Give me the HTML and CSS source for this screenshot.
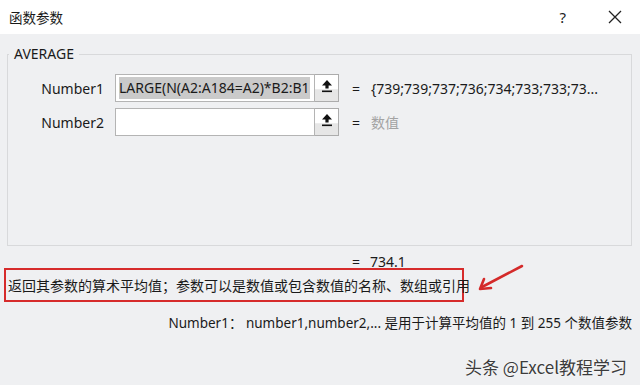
FILE: index.html
```html
<!DOCTYPE html>
<html lang="zh-CN">
<head>
    <meta charset="UTF-8">
    <meta name="viewport" content="width=device-width, initial-scale=1.0">
    <title>函数参数</title>
    <link rel="stylesheet" href="styles.css">
</head>
<body>
<div class="dialog">
    <!-- Title bar -->
    <div class="titlebar">
        <div class="title">函数参数</div>
        <div class="title-actions">
            <span class="help">?</span>
            <svg class="close" width="14" height="14" viewBox="0 0 14 14">
                <path d="M1 1 L13 13 M13 1 L1 13" stroke="#222" stroke-width="1.3" fill="none"/>
            </svg>
        </div>
    </div>

    <!-- Main content -->
    <div class="content">
        <fieldset class="group">
            <legend>AVERAGE</legend>
            <div class="arg-row">
                <label class="arg-label">Number1</label>
                <div class="arg-input"><span class="selected">LARGE(N(A2:A184=A2)*B2:B1</span></div>
                <button class="ref-btn">
                    <svg width="12" height="14" viewBox="0 0 12 14">
                        <path d="M6 1 L11 6.5 L7.6 6.5 L7.6 9.5 L4.4 9.5 L4.4 6.5 L1 6.5 Z" fill="#111"/>
                        <rect x="1" y="11.5" width="10" height="1.6" fill="#111"/>
                    </svg>
                </button>
                <span class="eq">=</span>
                <span class="arg-value">{739;739;737;736;734;733;733;73...</span>
            </div>
            <div class="arg-row">
                <label class="arg-label">Number2</label>
                <div class="arg-input"></div>
                <button class="ref-btn">
                    <svg width="12" height="14" viewBox="0 0 12 14">
                        <path d="M6 1 L11 6.5 L7.6 6.5 L7.6 9.5 L4.4 9.5 L4.4 6.5 L1 6.5 Z" fill="#111"/>
                        <rect x="1" y="11.5" width="10" height="1.6" fill="#111"/>
                    </svg>
                </button>
                <span class="eq">=</span>
                <span class="arg-value placeholder">数值</span>
            </div>
        </fieldset>

        <div class="result"><span class="eq">=</span>734.1</div>

        <div class="desc-line">
            <div class="desc-box">返回其参数的算术平均值；参数可以是数值或包含数值的名称、数组或引用</div>
            <svg class="pointer" width="50" height="28" viewBox="0 0 50 28">
                <path d="M46 2 L6 23" stroke="#d42a2a" stroke-width="2.6" fill="none" stroke-linecap="round"/>
                <path d="M4 25 L8 15 M4 25 L15 24" stroke="#d42a2a" stroke-width="2.6" fill="none" stroke-linecap="round"/>
            </svg>
        </div>

        <div class="arg-help">Number1： number1,number2,... 是用于计算平均值的 1 到 255 个数值参数</div>

        <div class="watermark">头条 @Excel教程学习</div>
    </div>
</div>
</body>
</html>
```

FILE: styles.css
```css
/* Global styles */
* {
    margin: 0;
    padding: 0;
    box-sizing: border-box;
}

body {
    font-family: "Noto Sans", "Noto Sans CJK SC", sans-serif;
    background-color: #eff0f2;
    color: #1a1a1a;
    width: 640px;
    height: 385px;
    overflow: hidden;
}

/* Title bar */
.titlebar {
    height: 34px;
    background-color: #ffffff;
    display: flex;
    justify-content: space-between;
    align-items: center;
    padding: 0 18px 0 9px;
}

.title {
    font-size: 13.5px;
    font-family: "Noto Sans CJK SC", sans-serif;
}

.title-actions {
    display: flex;
    align-items: center;
    gap: 42px;
}

.help {
    font-size: 15px;
    color: #222;
}

/* Main content */
.content {
    padding: 10px 8px 0 7px;
}

.group {
    border: 1px solid #d8d9db;
    height: 202px;
    padding: 0;
}

.group legend {
    font-size: 14px;
    line-height: 20px;
    padding: 0 5px 0 5px;
    margin-left: 1px;
}

.arg-row {
    display: flex;
    align-items: center;
    height: 28px;
    margin-top: 10px;
}

.arg-row + .arg-row {
    margin-top: 6px;
}

.arg-label {
    width: 96px;
    text-align: right;
    font-size: 14px;
    margin-right: 11px;
}

.arg-input {
    width: 200px;
    height: 28px;
    background-color: #ffffff;
    border: 1px solid #b4b4b4;
    padding: 2px 3px;
    font-size: 14px;
    line-height: 22px;
    white-space: nowrap;
    overflow: hidden;
}

.selected {
    background-color: #cacaca;
    display: inline-block;
    line-height: 22px;
}

.ref-btn {
    width: 24px;
    height: 28px;
    border: 1px solid #acacac;
    border-left: none;
    background: linear-gradient(#ffffff 0, #ffffff 55%, #e6e6e6 56%);
    display: flex;
    align-items: flex-start;
    justify-content: center;
    padding-top: 4px;
}

.eq {
    font-size: 14px;
    margin: 0 11px 0 13px;
}

.arg-value {
    font-size: 14px;
    white-space: nowrap;
}

.placeholder {
    color: #a3a3a3;
    font-family: "Noto Sans CJK SC", sans-serif;
}

/* Result and description */
.result {
    font-size: 14px;
    line-height: 20px;
    margin-top: 6px;
    padding-left: 345px;
}

.result .eq {
    margin: 0 10px 0 0;
}

.desc-line {
    display: flex;
    align-items: flex-start;
    margin: -4px 0 0 -3px;
}

.desc-box {
    width: 460px;
    height: 34px;
    border: 2px solid #d62b2b;
    font-family: "Noto Sans CJK SC", sans-serif;
    font-size: 14px;
    line-height: 30px;
    padding-left: 2px;
    white-space: nowrap;
}

.pointer {
    margin: -4px 0 0 12px;
}

.arg-help {
    text-align: right;
    font-size: 13.5px;
    line-height: 20px;
    margin-top: 11px;
    white-space: nowrap;
}

.watermark {
    text-align: right;
    font-family: "Noto Sans CJK SC", sans-serif;
    font-size: 17px;
    color: #3c3c3c;
    text-shadow: 0 0 2px #ffffff;
    margin-top: 21px;
    padding-right: 5px;
}
```
